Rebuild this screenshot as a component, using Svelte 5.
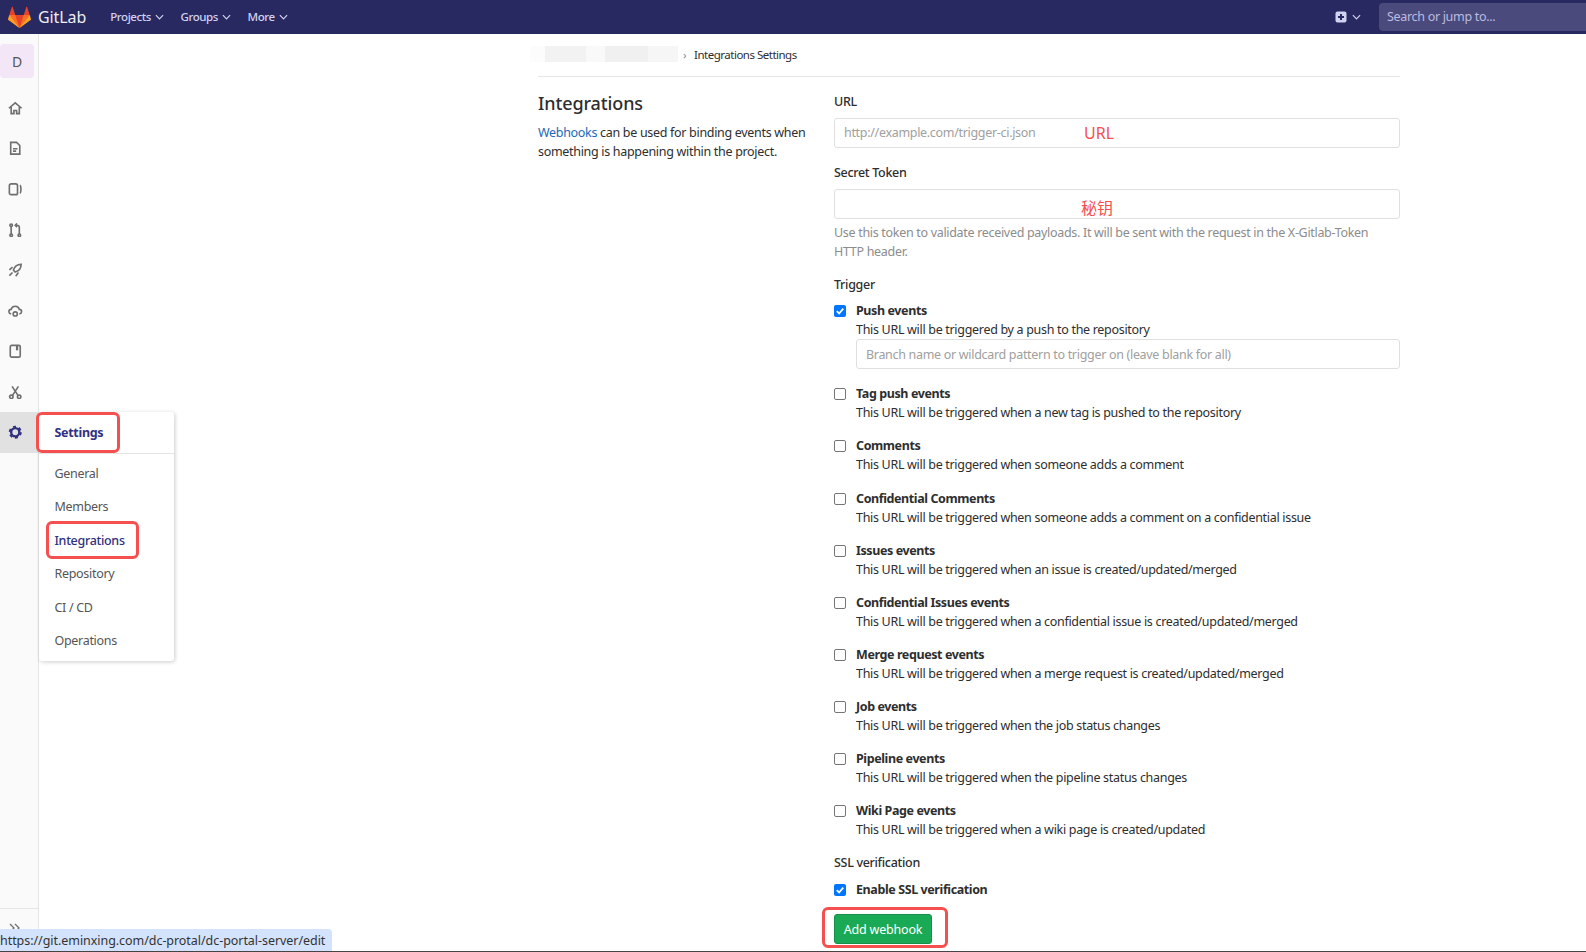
<script lang="ts">
	const triggers = [
		{ name: 'Tag push events', desc: 'This URL will be triggered when a new tag is pushed to the repository' },
		{ name: 'Comments', desc: 'This URL will be triggered when someone adds a comment' },
		{ name: 'Confidential Comments', desc: 'This URL will be triggered when someone adds a comment on a confidential issue' },
		{ name: 'Issues events', desc: 'This URL will be triggered when an issue is created/updated/merged' },
		{ name: 'Confidential Issues events', desc: 'This URL will be triggered when a confidential issue is created/updated/merged' },
		{ name: 'Merge request events', desc: 'This URL will be triggered when a merge request is created/updated/merged' },
		{ name: 'Job events', desc: 'This URL will be triggered when the job status changes' },
		{ name: 'Pipeline events', desc: 'This URL will be triggered when the pipeline status changes' },
		{ name: 'Wiki Page events', desc: 'This URL will be triggered when a wiki page is created/updated' }
	];

	const navItems = ['Projects', 'Groups', 'More'];
	const flyItems = ['General', 'Members', 'Integrations', 'Repository', 'CI / CD', 'Operations'];
</script>

{#snippet chevron()}
	<svg class="chev" viewBox="0 0 10 6" width="9" height="6"><path d="M1 1l4 4 4-4" fill="none" stroke="currentColor" stroke-width="1.3" /></svg>
{/snippet}

{#snippet check()}
	<span class="box checked">
		<svg viewBox="0 0 12 12" width="12" height="12"><path d="M2.8 6.2l2.3 2.3 4.2-4.8" fill="none" stroke="#fff" stroke-width="1.8" /></svg>
	</span>
{/snippet}

<header class="topbar">
	<svg class="logo" viewBox="0 0 36 36" width="23" height="23">
		<path fill="#e24329" d="M2 14l9.38 9v-9l-4-12.28c-.205-.632-1.176-.632-1.38 0z" />
		<path fill="#e24329" d="M34 14l-9.38 9v-9l4-12.28c.205-.632 1.176-.632 1.38 0z" />
		<path fill="#e24329" d="M18 34.38L3 14h30z" />
		<path fill="#fc6d26" d="M18 34.38L11.38 14H2l4 11z" />
		<path fill="#fc6d26" d="M18 34.38L24.62 14H34l-4 11z" />
		<path fill="#fca326" d="M2 14L.1 20.16c-.18.565 0 1.2.5 1.56l17.42 12.66z" />
		<path fill="#fca326" d="M34 14l1.9 6.16c.18.565 0 1.2-.5 1.56L18 34.38z" />
	</svg>
	<span class="brand">GitLab</span>
	<nav class="topnav">
		{#each navItems as item}
			<span class="navitem">{item} {@render chevron()}</span>
		{/each}
	</nav>
	<div class="topright">
		<span class="plus">
			<svg viewBox="0 0 12 12" width="12" height="12"><rect width="11" height="11" x=".5" y=".5" rx="2" fill="#d1d1f0" /><path d="M6 3v6M3 6h6" stroke="#292961" stroke-width="2" /></svg>
			{@render chevron()}
		</span>
		<div class="search">Search or jump to...</div>
	</div>
</header>

<div class="page">
	<aside class="sidebar">
		<div class="avatar">D</div>
		<ul class="icons">
			<li>
				<svg viewBox="0 0 16 16"><path d="M1 8l7-6 7 6M3.500 6.500V14h3v-3.500h3V14h3V6.500" /></svg>
			</li>
			<li>
				<svg viewBox="0 0 16 16"><path d="M3 1.500h6.500L13 5v9.500H3zM5.500 8.500h5M5.500 11.200h3.500" /></svg>
			</li>
			<li>
				<svg viewBox="0 0 16 16"><rect x="1.500" y="2" width="9" height="12" rx="2" /><path d="M13.300 3.500c1.300 1 1.300 8 0 9" /></svg>
			</li>
			<li>
				<svg viewBox="0 0 16 16"><circle cx="3.500" cy="2.500" r="1.400" /><circle cx="3.500" cy="13.500" r="1.400" /><circle cx="12.500" cy="13.500" r="1.400" /><path d="M3.500 4v8M12.500 12V5c0-1.500-1-2.500-2.500-2.500H8M10 .5L8 2.500l2 2" /></svg>
			</li>
			<li>
				<svg viewBox="0 0 16 16"><path d="M14.500 1.500c-4.500 0-7.500 2.500-8.500 6.500l2 2c4-1 6.500-4 6.500-8.500zM5 4.500L1.500 7.500M11.500 10.500L8.500 14.500M5 10.500L1.500 14" /></svg>
			</li>
			<li>
				<svg viewBox="0 0 16 16"><path d="M3.500 11C1.500 10.500 1 9.500 1 8.500 1 7 2 6 3.500 6 4 3.500 6 2.500 8 2.500s4 1 4.500 3.500C14 6 15 7 15 8.500c0 1-.5 2-2.500 2.500" /><circle cx="8" cy="11" r="2.300" /></svg>
			</li>
			<li>
				<svg viewBox="0 0 16 16"><rect x="2.500" y="1.500" width="11" height="13" rx="1.500" /><path d="M10 2v5" stroke-width="2.500" /></svg>
			</li>
			<li>
				<svg viewBox="0 0 16 16"><circle cx="3.700" cy="13" r="1.900" /><circle cx="12.300" cy="13" r="1.900" /><path d="M5 11.500L11.500 1.500M11 11.500L4.500 1.500" /></svg>
			</li>
			<li class="active">
				<svg viewBox="0 0 16 16"><circle cx="8" cy="8" r="4.500" stroke-width="2.600" /><circle cx="8" cy="8" r="6.200" stroke-width="2" stroke-dasharray="3.300 3.190" /></svg>
			</li>
		</ul>
		<div class="collapse">
			<svg viewBox="0 0 12 12" width="12" height="12"><path d="M1 3l4 4-4 4M6 3l4 4-4 4" /></svg>
		</div>
	</aside>

	<main class="content">
		<div class="crumbs">
			<span class="smudge"></span>
			<span class="sep">›</span>
			<span>Integrations Settings</span>
		</div>

		<div class="row">
			<div class="intro">
				<h4>Integrations</h4>
				<p><a href="#top">Webhooks</a> can be used for binding events when something is happening within the project.</p>
			</div>

			<form class="form" onsubmit={(e) => e.preventDefault()}>
				<div class="label">URL</div>
				<div class="field">
					<div class="input placeholder">http://example.com/trigger-ci.json</div>
					<span class="note url-note">URL</span>
				</div>

				<div class="label secret">Secret Token</div>
				<div class="field">
					<div class="input"></div>
					<span class="note key-note">秘钥</span>
				</div>
				<p class="help">Use this token to validate received payloads. It will be sent with the request in the X-Gitlab-Token HTTP header.</p>

				<div class="label trigger">Trigger</div>
				<div class="check first">
					{@render check()}
					<div class="check-text">
						<strong>Push events</strong>
						<div>This URL will be triggered by a push to the repository</div>
						<div class="input placeholder branch">Branch name or wildcard pattern to trigger on (leave blank for all)</div>
					</div>
				</div>

				{#each triggers as t}
					<div class="check">
						<span class="box"></span>
						<div class="check-text">
							<strong>{t.name}</strong>
							<div>{t.desc}</div>
						</div>
					</div>
				{/each}

				<div class="label ssl">SSL verification</div>
				<div class="check ssl-check">
					{@render check()}
					<div class="check-text"><strong>Enable SSL verification</strong></div>
				</div>

				<div class="actions">
					<button type="submit">Add webhook</button>
					<span class="mark mark-btn"></span>
				</div>
			</form>
		</div>
	</main>

	<div class="flyout">
		<div class="fly-head">Settings</div>
		<ul>
			{#each flyItems as item}
				<li class:current={item === 'Integrations'}>{item}</li>
			{/each}
		</ul>
		<span class="mark mark-settings"></span>
		<span class="mark mark-integrations"></span>
	</div>
</div>

<div class="status">https://git.eminxing.com/dc-protal/dc-portal-server/edit</div>
<div class="edge"></div>

<style>
	:global(body) {
		margin: 0;
		background: #fff;
		overflow: hidden;
	}

	:global(#app) {
		font-family: 'Noto Sans', sans-serif;
		font-size: 12.500px;
		letter-spacing: -0.31px;
		color: #2e2e2e;
		height: 952px;
		position: relative;
		overflow: hidden;
	}

	.topbar {
		height: 34px;
		background: #292961;
		display: flex;
		align-items: center;
		padding-left: 8px;
		box-sizing: border-box;
		color: #d1d1f0;
	}

	.logo {
		flex: none;
	}

	.brand {
		color: #fff;
		font-size: 16px;
		margin-left: 7px;
		letter-spacing: -0.1px;
		opacity: 0.92;
		line-height: 32px;
	}

	.topnav {
		display: flex;
		gap: 16.500px;
		margin-left: 24px;
		font-size: 11.500px;
		font-weight: 500;
		letter-spacing: -0.4px;
		line-height: 32px;
	}

	.navitem {
		display: flex;
		align-items: center;
		gap: 4px;
	}

	.chev {
		display: block;
	}

	.topright {
		margin-left: auto;
		display: flex;
		align-items: center;
		height: 100%;
	}

	.plus {
		display: flex;
		align-items: center;
		gap: 5px;
		margin-right: 18px;
	}

	.search {
		width: 207px;
		height: 28px;
		box-sizing: border-box;
		padding-left: 8px;
		line-height: 28px;
		background: #4a4a7c;
		border-radius: 4px 0 0 4px;
		color: #bcbce0;
	}

	.page {
		display: flex;
		height: 918px;
		position: relative;
	}

	.sidebar {
		width: 39px;
		flex: none;
		box-sizing: border-box;
		background: #fafafa;
		border-right: 1px solid #e5e5e5;
		padding-top: 10px;
		position: relative;
	}

	.avatar {
		width: 34px;
		height: 34px;
		background: #f3e6f7;
		border-radius: 4px;
		text-align: center;
		line-height: 36px;
		font-size: 14px;
		color: #555;
		letter-spacing: 0;
	}

	.icons {
		list-style: none;
		margin: 9.200px 0 0;
		padding: 0;
	}

	.icons li {
		height: 40.600px;
		box-sizing: border-box;
		padding: 1px 0 0 8px;
		display: flex;
		align-items: center;
	}

	.icons svg {
		width: 14.500px;
		height: 14.500px;
		fill: none;
		stroke: #6f6f6f;
		stroke-width: 1.800;
	}

	.icons li.active {
		background: #e1e1e1;
	}

	.icons li.active svg {
		stroke: #303080;
	}

	.collapse {
		position: absolute;
		left: 0;
		right: 0;
		top: 874px;
		height: 44px;
		border-top: 1px solid #e5e5e5;
		padding: 11px 0 0 9px;
	}

	.collapse svg {
		fill: none;
		stroke: #707070;
		stroke-width: 1.300;
	}

	.content {
		width: 862px;
		margin-left: 499px;
		flex: none;
	}

	.crumbs {
		height: 43px;
		box-sizing: border-box;
		border-bottom: 1px solid #e5e5e5;
		display: flex;
		align-items: center;
		font-size: 11.500px;
		letter-spacing: -0.5px;
		color: #2e2e2e;
		padding-bottom: 2px;
	}

	.smudge {
		width: 148px;
		height: 16px;
		margin-left: -8px;
		background: linear-gradient(90deg, #fcfcfc 0 10%, #f2f2f2 10% 38%, #f9f9f9 38% 51%, #f0f0f0 51% 80%, #f6f6f6 80% 100%);
	}

	.sep {
		margin: 0 8px 0 5px;
		color: #888;
	}

	.row {
		display: flex;
		padding-top: 15px;
	}

	.intro {
		width: 296px;
		flex: none;
	}

	h4 {
		margin: -2px 0 0;
		font-size: 18px;
		font-weight: 500;
		line-height: 26px;
		letter-spacing: -0.12px;
	}

	p {
		margin: 0;
	}

	.intro p {
		margin-top: 7px;
		line-height: 19px;
		width: 275px;
	}

	a {
		color: #1b69b6;
		text-decoration: none;
	}

	.form {
		flex: 1;
		min-width: 0;
	}

	.label {
		font-weight: 500;
		line-height: 20px;
		height: 18px;
	}

	.field {
		position: relative;
		margin-top: 8px;
	}

	.input {
		height: 30px;
		box-sizing: border-box;
		border: 1px solid #dfdfdf;
		border-radius: 3px;
		padding: 0 9px;
		line-height: 28px;
		background: #fff;
	}

	.placeholder {
		color: #a0a0a0;
	}

	.note {
		position: absolute;
		color: #f5504e;
		letter-spacing: 0;
	}

	.url-note {
		left: 250px;
		top: 4px;
		font-size: 16px;
	}

	.key-note {
		left: 247px;
		top: 6px;
		font-size: 16px;
		font-family: 'Noto Sans CJK SC', sans-serif;
	}

	.secret {
		margin-top: 15px;
	}

	.help {
		color: #8c8c8c;
		line-height: 19px;
		margin-top: 4px;
	}

	.trigger {
		margin-top: 14px;
	}

	.check {
		display: flex;
		margin-top: 14.100px;
		line-height: 19px;
	}

	.check.first {
		margin-top: 8.300px;
	}

	.check-text {
		flex: 1;
		margin-left: 10px;
		min-width: 0;
	}

	.check-text strong {
		font-weight: 700;
		display: block;
		letter-spacing: -0.4px;
	}

	.box {
		flex: none;
		width: 12px;
		height: 12px;
		margin-top: 4px;
		box-sizing: border-box;
		border: 1px solid #767676;
		border-radius: 2px;
		background: #fff;
		display: block;
	}

	.box.checked {
		background: #0075ff;
		border: 0;
	}

	.box svg {
		display: block;
	}

	.branch {
		margin: 0 0 1px;
		line-height: 30px;
	}

	.ssl {
		margin-top: 15px;
		line-height: 18px;
	}

	.ssl-check {
		margin-top: 8px;
	}

	.actions {
		position: relative;
		margin-top: 15px;
	}

	button {
		display: block;
		width: 98px;
		height: 30px;
		padding: 0;
		background: #1aaa55;
		border: 1px solid #168f48;
		border-radius: 3px;
		color: #fff;
		font: inherit;
		letter-spacing: -0.2px;
	}

	.mark {
		position: absolute;
		box-sizing: border-box;
		border: 3.500px solid #f64f4f;
		border-radius: 6px;
	}

	.mark-btn {
		left: -12px;
		top: -7px;
		width: 126px;
		height: 41px;
	}

	.flyout {
		position: absolute;
		left: 39px;
		top: 378px;
		width: 135px;
		height: 249px;
		background: #fff;
		border-radius: 3px;
		box-shadow: 1px 1px 4px rgba(0, 0, 0, 0.2);
	}

	.fly-head {
		height: 42px;
		box-sizing: border-box;
		border-bottom: 1px solid #e5e5e5;
		padding-left: 15.500px;
		line-height: 41px;
		font-weight: 700;
		color: #303080;
	}

	.flyout ul {
		list-style: none;
		margin: 0;
		padding: 3px 0 0 15.500px;
	}

	.flyout li {
		height: 33.400px;
		line-height: 33.400px;
		color: #555;
	}

	.flyout li.current {
		color: #303080;
		font-weight: 500;
	}

	.mark-settings {
		left: -3px;
		top: 0;
		width: 84px;
		height: 41px;
	}

	.mark-integrations {
		left: 7px;
		top: 109px;
		width: 93px;
		height: 38px;
	}

	.status {
		position: absolute;
		left: 0;
		top: 929px;
		height: 22px;
		width: 332px;
		box-sizing: border-box;
		background: #d3e3fd;
		border-radius: 0 4px 0 0;
		font-size: 12.500px;
		line-height: 23px;
		color: #333;
		letter-spacing: -0.05px;
		white-space: nowrap;
	}

	.edge {
		position: absolute;
		left: 0;
		right: 0;
		top: 951px;
		height: 1px;
		background: #444;
	}
</style>
